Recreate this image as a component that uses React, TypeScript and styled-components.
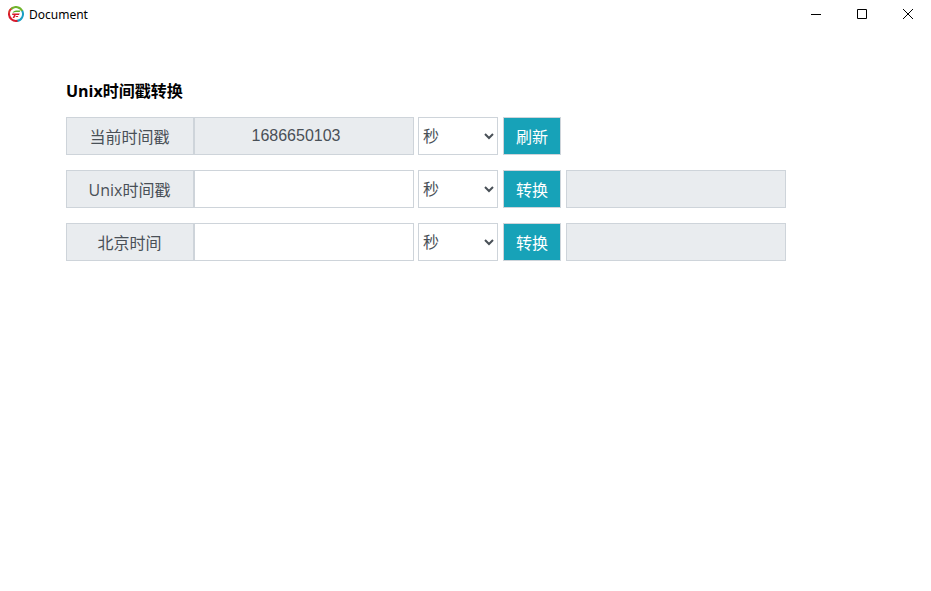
import React, { useId, useState } from "react";
import styled, { createGlobalStyle, css } from "styled-components";

const uiFont = `"Open Sans", "Noto Sans CJK SC", sans-serif`;

const GlobalStyle = createGlobalStyle`
  * { box-sizing: border-box; }
  body {
    margin: 0;
    background: #fff;
    color: #000;
    font-family: ${uiFont};
    font-size: 16px;
  }
`;

const TitleBar = styled.header`
  display: flex;
  align-items: center;
  height: 30px;
  padding-left: 8px;
`;

const Logo = styled.svg`
  margin-bottom: 2px;
`;

const WindowTitle = styled.span`
  flex: 1;
  padding-left: 5px;
  font-family: "Noto Sans", sans-serif;
  font-size: 12px;
  line-height: 16px;
`;

const WindowButton = styled.button`
  display: flex;
  align-items: center;
  justify-content: center;
  width: 46px;
  height: 30px;
  padding: 0 0 2px;
  border: 0;
  background: transparent;
`;

const Main = styled.main`
  padding: 50px 66px 0;
`;

const Heading = styled.h1`
  margin: 0 0 15px;
  font-size: 16px;
  font-weight: 700;
  line-height: 22px;
`;

const Rows = styled.div`
  display: grid;
  gap: 15px;
`;

const Row = styled.form`
  display: flex;
  gap: 5px;
`;

const box = css`
  height: 38px;
  border: 1px solid #ced4da;
  border-radius: 0;
  color: #495057;
  font-family: ${uiFont};
  font-size: 16px;
`;

const Group = styled.div`
  display: flex;
  margin-right: -1px;
`;

const Label = styled.label`
  ${box}
  width: 128px;
  padding: 2px 1px 0 0;
  background: #e9ecef;
  line-height: 34px;
  text-align: center;
`;

const Field = styled.input<{ $filled?: boolean }>`
  ${box}
  width: 220px;
  padding: 0 12px;
  background: ${(p) => (p.$filled ? "#e9ecef" : "#fff")};
  font-family: "Liberation Sans", "Noto Sans CJK SC", sans-serif;
  text-align: ${(p) => (p.$filled ? "center" : "left")};
  outline: none;
`;

const CurrentField = styled(Field)`
  padding: 0 26px 0 10px;
`;

const Unit = styled.select`
  ${box}
  width: 80px;
  padding: 0 1px 0 0;
  background: #fff;
  font-family: "Liberation Sans", "Noto Sans CJK SC", sans-serif;
`;

const Action = styled.button`
  ${box}
  width: 58px;
  padding: 0;
  background: #17a2b8;
  color: #fff;
`;

function AppLogo() {
  return (
    <Logo width="16" height="16" viewBox="0 0 16 16" fill="none" aria-hidden="true">
      <path d="M1 8.5A7 7 0 0 1 5 1.7" stroke="#d9352c" strokeWidth="2" />
      <path d="M3.2 2.9A7 7 0 0 1 14.4 5.2" stroke="#6fb52c" strokeWidth="2" />
      <path d="M14.2 4.8A7 7 0 0 1 8.5 15" stroke="#1c9fc4" strokeWidth="2" />
      <path d="M9.5 14.8A7 7 0 0 1 1 7.5" stroke="#d8192c" strokeWidth="2" />
      <path d="M4.5 7Q5.2 4.5 8 4.5h4.4l-.7 1.5H8Q6.6 6 4.5 7Z" fill="#62ad2c" />
      <path d="M4.2 7.4h7.5L11 8.9H7.7L6.3 12H4.6L6 8.9H4.2Z" fill="#d8192c" />
      <path d="M8 9.9h2.4l-.6 1.2H7.4Z" fill="#d8192c" />
    </Logo>
  );
}

function WindowControls() {
  const icons = [
    { label: "最小化", path: "M0 5.5h10" },
    { label: "最大化", path: "M.5.5h9v9h-9z" },
    { label: "关闭", path: "M0 0l10 10M10 0L0 10" },
  ];
  return (
    <>
      {icons.map(({ label, path }) => (
        <WindowButton key={label} type="button" aria-label={label}>
          <svg width="10" height="10" viewBox="0 0 10 10">
            <path d={path} fill="none" stroke="#000" />
          </svg>
        </WindowButton>
      ))}
    </>
  );
}

type Kind = "now" | "unix" | "date";

function ConvertRow({ kind, label, action }: { kind: Kind; label: string; action: string }) {
  const id = useId();
  const isNow = kind === "now";
  const [value, setValue] = useState(isNow ? "1686650103" : "");
  const [unit, setUnit] = useState("s");
  const [result, setResult] = useState("");

  const submit = (event: React.FormEvent) => {
    event.preventDefault();
    const scale = unit === "s" ? 1000 : 1;
    if (isNow) {
      setValue(String(Math.floor(Date.now() / scale)));
    } else if (value && kind === "unix") {
      setResult(
        new Date(Number(value) * scale).toLocaleString("zh-CN", { timeZone: "Asia/Shanghai" })
      );
    } else if (value) {
      const time = Date.parse(value.trim().replace(" ", "T") + "+08:00");
      setResult(String(Math.floor(time / scale)));
    }
  };

  return (
    <Row onSubmit={submit}>
      <Group>
        <Label htmlFor={id}>{label}</Label>
        {isNow ? (
          <CurrentField id={id} $filled readOnly value={value} />
        ) : (
          <Field id={id} value={value} onChange={(e) => setValue(e.target.value)} />
        )}
      </Group>
      <Unit aria-label={`${label}单位`} value={unit} onChange={(e) => setUnit(e.target.value)}>
        <option value="s">秒</option>
        <option value="ms">毫秒</option>
      </Unit>
      <Action type="submit">{action}</Action>
      {!isNow && <Field $filled readOnly aria-label={`${label}结果`} value={result} />}
    </Row>
  );
}

export default function App() {
  return (
    <>
      <GlobalStyle />
      <TitleBar>
        <AppLogo />
        <WindowTitle>Document</WindowTitle>
        <WindowControls />
      </TitleBar>
      <Main>
        <Heading>Unix时间戳转换</Heading>
        <Rows>
          <ConvertRow kind="now" label="当前时间戳" action="刷新" />
          <ConvertRow kind="unix" label="Unix时间戳" action="转换" />
          <ConvertRow kind="date" label="北京时间" action="转换" />
        </Rows>
      </Main>
    </>
  );
}
